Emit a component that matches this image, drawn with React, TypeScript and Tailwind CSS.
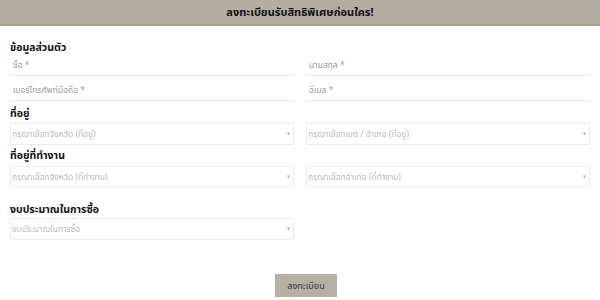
const font = { fontFamily: '"Noto Sans", "Noto Sans Thai", "DejaVu Sans", sans-serif' }

function LineInput({ placeholder }: { placeholder: string }) {
  return (
    <div className="h-[20px] border-b border-[#e6e6e6] flex items-center pl-[3px] text-[8.5px] text-[#9a9a9a]">
      {placeholder}
    </div>
  )
}

function SelectBox({ placeholder }: { placeholder: string }) {
  return (
    <div className="h-[22px] border border-[#ececec] rounded-[1px] flex items-center justify-between pl-[1px] pr-[3px] text-[8.5px] text-[#b9b9b9]">
      <span>{placeholder}</span>
      <span className="text-[4px] text-[#b0b0b0]">▼</span>
    </div>
  )
}

function Heading({ children, className = '' }: { children: string; className?: string }) {
  return <div className={`h-[14px] flex items-center text-[10.5px] font-bold text-[#111] ${className}`}>{children}</div>
}

export default function App() {
  return (
    <div className="w-[600px] h-[300px] bg-white overflow-hidden" style={font}>
      <div className="h-[26px] bg-[#b4aea2] border-b-2 border-[#a9a396] flex items-center justify-center text-[11px] font-bold text-[#111]">
        ลงทะเบียนรับสิทธิพิเศษก่อนใคร!
      </div>

      <div className="px-[10px]">
        <Heading className="mt-[15px]">ข้อมูลส่วนตัว</Heading>
        <div className="grid grid-cols-2 gap-x-[12px] gap-y-[5px] mt-[1px]">
          <LineInput placeholder="ชื่อ *" />
          <LineInput placeholder="นามสกุล *" />
          <LineInput placeholder="เบอร์โทรศัพท์มือถือ *" />
          <LineInput placeholder="อีเมล *" />
        </div>

        <Heading className="mt-[6px]">ที่อยู่</Heading>
        <div className="grid grid-cols-2 gap-x-[12px] mt-[2px]">
          <SelectBox placeholder="กรุณาเลือกจังหวัด (ที่อยู่)" />
          <SelectBox placeholder="กรุณาเลือกเขต / อำเภอ (ที่อยู่)" />
        </div>

        <Heading className="mt-[4px]">ที่อยู่ที่ทำงาน</Heading>
        <div className="grid grid-cols-2 gap-x-[12px] mt-[3px]">
          <SelectBox placeholder="กรุณาเลือกจังหวัด (ที่ทำงาน)" />
          <SelectBox placeholder="กรุณาเลือกอำเภอ (ที่ทำงาน)" />
        </div>

        <Heading className="mt-[15px]">งบประมาณในการซื้อ</Heading>
        <div className="grid grid-cols-2 gap-x-[12px] mt-[1px]">
          <SelectBox placeholder="งบประมาณในการซื้อ" />
        </div>

        <div className="flex justify-center mt-[34px] pl-[12px]">
          <button className="w-[62px] h-[23px] bg-[#b6b0a4] text-[9px] text-[#333]">ลงทะเบียน</button>
        </div>
      </div>
    </div>
  )
}
